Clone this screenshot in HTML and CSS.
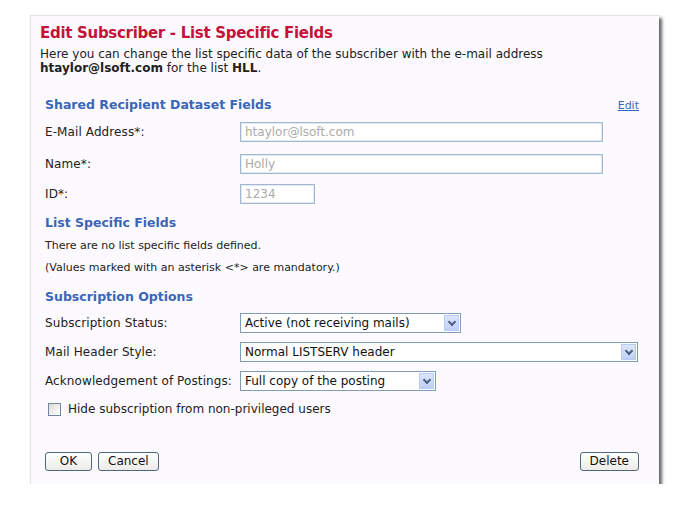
FILE: index.html
```html
<!DOCTYPE html>
<html lang="en">
<head>
    <meta charset="UTF-8">
    <title>Edit Subscriber - List Specific Fields</title>
    <link rel="stylesheet" href="styles.css">
</head>
<body>

<div class="panel">
    <h1>Edit Subscriber - List Specific Fields</h1>
    <p class="intro">Here you can change the list specific data of the subscriber with the e-mail address<br>
        <b>htaylor@lsoft.com</b> for the list <b>HLL</b>.</p>

    <div class="section">
        <div class="section-head">
            <h2>Shared Recipient Dataset Fields</h2>
            <a href="#" class="edit-link">Edit</a>
        </div>
        <div class="row first">
            <label>E-Mail Address*:</label>
            <div class="field wide">htaylor@lsoft.com</div>
        </div>
        <div class="row">
            <label>Name*:</label>
            <div class="field wide">Holly</div>
        </div>
        <div class="row">
            <label>ID*:</label>
            <div class="field short">1234</div>
        </div>
    </div>

    <div class="section">
        <h2 class="list-head">List Specific Fields</h2>
        <p class="note first">There are no list specific fields defined.</p>
        <p class="note">(Values marked with an asterisk &lt;*&gt; are mandatory.)</p>
    </div>

    <div class="section">
        <h2 class="opts-head">Subscription Options</h2>
        <div class="row tight">
            <label>Subscription Status:</label>
            <div class="select status">Active (not receiving mails)<span class="arrow"></span></div>
        </div>
        <div class="row tight">
            <label>Mail Header Style:</label>
            <div class="select header">Normal LISTSERV header<span class="arrow"></span></div>
        </div>
        <div class="row tight">
            <label>Acknowledgement of Postings:</label>
            <div class="select ack">Full copy of the posting<span class="arrow"></span></div>
        </div>
        <div class="check-row">
            <span class="checkbox"></span>
            <span>Hide subscription from non-privileged users</span>
        </div>
    </div>

    <div class="buttons">
        <div class="left">
            <button class="btn ok">OK</button>
            <button class="btn">Cancel</button>
        </div>
        <button class="btn">Delete</button>
    </div>
</div>

</body>
</html>
```

FILE: styles.css
```css
body {
    margin: 0;
    background-color: #FFFFFF;
    font-family: "DejaVu Sans", Verdana, sans-serif;
    font-size: 12px;
    color: #222222;
}

.panel {
    box-sizing: border-box;
    width: 629px;
    margin: 15px 0 0 30px;
    padding: 7px 20px 13px 9px;
    background-color: #FCFAFE;
    border-top: 1px solid #E2E2E6;
    border-left: 1px solid #E2E2E6;
    box-shadow: 3px 3px 3px rgba(0, 0, 0, 0.6);
}

h1 {
    margin: 0;
    font-size: 15px;
    line-height: 20px;
    color: #C4123A; /* crimson title */
    letter-spacing: -0.3px;
}

.intro {
    margin: 4px 0 0 0;
    line-height: 14px;
}

.section {
    margin-left: 5px;
}

h2 {
    margin: 0;
    font-size: 12.5px;
    line-height: 18px;
    color: #3A66B8; /* section blue */
}

.section-head {
    display: flex;
    justify-content: space-between;
    align-items: center;
    margin-top: 21px;
    margin-bottom: 8px;
}

.edit-link {
    color: #3A66B8;
    font-size: 11px;
}

.row {
    display: grid;
    grid-template-columns: 195px 1fr;
    align-items: center;
    height: 20px;
    margin-bottom: 10px;
    letter-spacing: 0.1px;
}

.row.first {
    margin-bottom: 12px;
}

.row.tight {
    margin-bottom: 9px;
}

.field {
    box-sizing: border-box;
    height: 20px;
    padding: 2px 4px;
    border: 1px solid #A3B6CF;
    box-shadow: inset 0 0 0 1px #E3E9F1;
    background-color: #FFFFFF;
    color: #ABABAB;
    line-height: 14px;
    letter-spacing: 0;
}

.field.wide {
    width: 363px;
}

.field.short {
    width: 75px;
}

.list-head {
    margin-top: 1px;
}

.note {
    margin: 8px 0 0 0;
    font-size: 11px;
    line-height: 14px;
}

.note.first {
    margin-top: 7px;
}

.opts-head {
    margin-top: 13px;
    margin-bottom: 7px;
}

.select {
    position: relative;
    box-sizing: border-box;
    height: 20px;
    padding: 2px 4px;
    border: 1px solid #7F9DB9;
    background-color: #FFFFFF;
    color: #111111;
    line-height: 14px;
    letter-spacing: 0;
}

.select.status {
    width: 221px;
}

.select.header {
    width: 398px;
}

.select.ack {
    width: 196px;
}

.arrow {
    position: absolute;
    top: 1px;
    right: 1px;
    width: 15px;
    height: 16px;
    box-sizing: border-box;
    border: 1px solid #B9CBF3;
    background: linear-gradient(#DCE6FC, #BFD0F7);
}

.arrow::after {
    content: "";
    position: absolute;
    left: 4px;
    top: 3px;
    width: 4px;
    height: 4px;
    border-right: 2px solid #4D6185;
    border-bottom: 2px solid #4D6185;
    transform: rotate(45deg);
}

.check-row {
    display: flex;
    align-items: center;
    gap: 7px;
    margin: 11px 0 0 3px;
}

.checkbox {
    box-sizing: border-box;
    width: 13px;
    height: 13px;
    border: 1px solid #6F86A6;
    background: linear-gradient(135deg, #DCDCD6, #FFFFFF);
}

.buttons {
    display: flex;
    justify-content: space-between;
    align-items: center;
    margin: 36px 0 0 5px;
}

.buttons .left {
    display: flex;
    gap: 6px;
}

.btn {
    height: 19px;
    padding: 0 9px;
    font-family: "DejaVu Sans", Verdana, sans-serif;
    font-size: 12px;
    line-height: 15px;
    color: #111111;
    border: 1px solid #4F6680;
    border-radius: 3px;
    background: linear-gradient(#FFFFFF, #ECEBE6);
}

.btn.ok {
    width: 47px;
}
```
